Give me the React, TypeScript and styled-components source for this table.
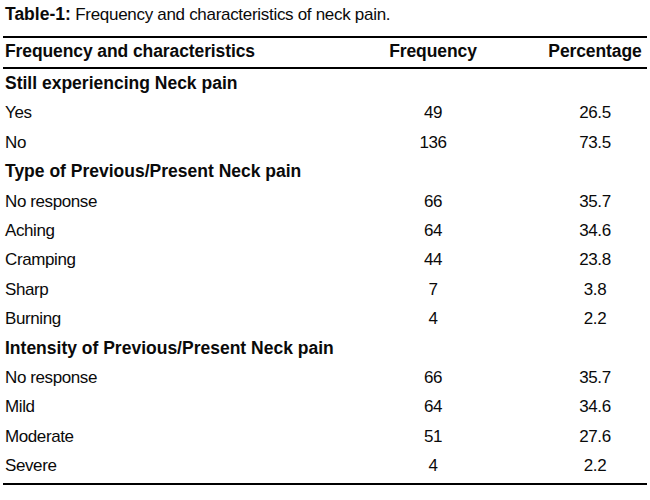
import type { FC } from 'react';
import styled, { createGlobalStyle } from 'styled-components';

interface Item {
  label: string;
  frequency: number;
  percentage: string;
}

interface Section {
  title: string;
  items: Item[];
}

const sections: Section[] = [
  {
    title: 'Still experiencing Neck pain',
    items: [
      { label: 'Yes', frequency: 49, percentage: '26.5' },
      { label: 'No', frequency: 136, percentage: '73.5' },
    ],
  },
  {
    title: 'Type of Previous/Present Neck pain',
    items: [
      { label: 'No response', frequency: 66, percentage: '35.7' },
      { label: 'Aching', frequency: 64, percentage: '34.6' },
      { label: 'Cramping', frequency: 44, percentage: '23.8' },
      { label: 'Sharp', frequency: 7, percentage: '3.8' },
      { label: 'Burning', frequency: 4, percentage: '2.2' },
    ],
  },
  {
    title: 'Intensity of Previous/Present Neck pain',
    items: [
      { label: 'No response', frequency: 66, percentage: '35.7' },
      { label: 'Mild', frequency: 64, percentage: '34.6' },
      { label: 'Moderate', frequency: 51, percentage: '27.6' },
      { label: 'Severe', frequency: 4, percentage: '2.2' },
    ],
  },
];

const GlobalStyle = createGlobalStyle`
  html, body {
    margin: 0;
    padding: 0;
    background: #fff;
  }
  body {
    font-family: "Liberation Sans", Arial, sans-serif;
    color: #0a0a0a;
  }
`;

const Page = styled.div`
  width: 644px;
  margin-left: 3px;
`;

const Caption = styled.div`
  height: 28px;
  line-height: 28px;
  margin-bottom: 8px;
  padding-left: 2px;
  font-size: 17px;
  letter-spacing: -0.3px;
  white-space: nowrap;
`;

const CaptionLabel = styled.b`
  font-size: 17.5px;
  letter-spacing: 0;
`;

const Table = styled.table`
  width: 644px;
  table-layout: fixed;
  border-collapse: separate;
  border-spacing: 0;
  border-top: 2px solid #000;
  border-bottom: 2px solid #000;
`;

const HeadCell = styled.th<{ $align?: 'left' | 'center' }>`
  padding: 0 0 3px ${p => (p.$align === 'center' ? '0' : '2px')};
  line-height: 26px;
  font-size: 17.5px;
  font-weight: 700;
  letter-spacing: -0.1px;
  text-align: ${p => p.$align ?? 'left'};
  border-bottom: 2px solid #000;
  white-space: nowrap;
`;

const Row = styled.tr`
  &:last-child > td {
    padding-bottom: 2.4px;
  }
`;

const SectionCell = styled.td`
  padding: 0 0 0 2px;
  line-height: 29.4px;
  font-size: 17.5px;
  font-weight: 700;
  white-space: nowrap;
`;

const Cell = styled.td<{ $align?: 'left' | 'center' }>`
  padding: 0 0 0 ${p => (p.$align === 'center' ? '0' : '2px')};
  line-height: 29.4px;
  font-size: 17px;
  letter-spacing: -0.4px;
  text-align: ${p => p.$align ?? 'left'};
  white-space: nowrap;
`;

const App: FC = () => (
  <Page>
    <GlobalStyle />
    <Caption>
      <CaptionLabel>Table-1:</CaptionLabel> Frequency and characteristics of neck pain.
    </Caption>
    <Table>
      <colgroup>
        <col style={{ width: 320 }} />
        <col style={{ width: 220 }} />
        <col style={{ width: 104 }} />
      </colgroup>
      <thead>
        <tr>
          <HeadCell>Frequency and characteristics</HeadCell>
          <HeadCell $align="center">Frequency</HeadCell>
          <HeadCell $align="center">Percentage</HeadCell>
        </tr>
      </thead>
      <tbody>
        {sections.flatMap(section => [
          <Row key={section.title}>
            <SectionCell colSpan={3}>{section.title}</SectionCell>
          </Row>,
          ...section.items.map(item => (
            <Row key={`${section.title}-${item.label}`}>
              <Cell>{item.label}</Cell>
              <Cell $align="center">{item.frequency}</Cell>
              <Cell $align="center">{item.percentage}</Cell>
            </Row>
          )),
        ])}
      </tbody>
    </Table>
  </Page>
);

export default App;
